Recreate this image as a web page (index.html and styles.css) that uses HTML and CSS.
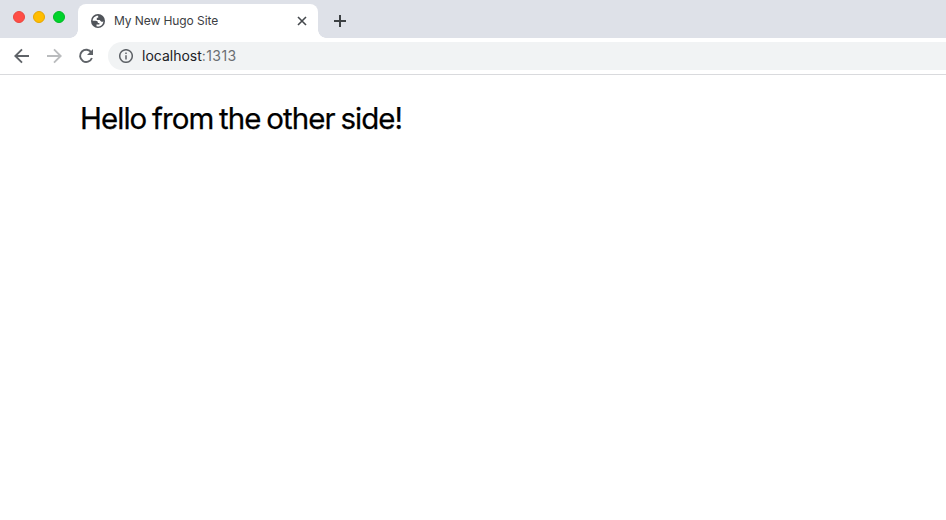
FILE: index.html
```html
<!DOCTYPE html>
<html lang="en">
<head>
<meta charset="utf-8">
<title>My New Hugo Site</title>
<link rel="stylesheet" href="styles.css">
</head>
<body>
<header class="tabs">
  <div class="lights"><i class="light red"></i><i class="light yellow"></i><i class="light green"></i></div>
  <div class="tab">
    <svg class="globe" viewBox="0 0 14 14"><circle cx="7" cy="7" r="7" fill="#50545a"/><path fill="#fff" d="M7.2 1.7C4 1.5 1.7 4 1.6 6.8h3.1c1.5 0 2.2.8 2.2 2.1h1.5v1.5H5.5v1.8c3.6 1 6.7-1.4 6.9-5-.7.7-1.6.7-2.3.3-.8-.4-.9-1.3-1.5-1.5H5.8V3.8h1.4z"/></svg>
    <span class="title">My New Hugo Site</span>
    <svg class="close" viewBox="0 0 10 10"><path d="M1 1l8 8M9 1L1 9"/></svg>
  </div>
  <svg class="plus" viewBox="0 0 12 12"><path d="M6 0v12M0 6h12"/></svg>
</header>
<nav class="toolbar">
  <svg class="nav" viewBox="0 0 16 16"><path d="M15 8H2M8 1.3L1.3 8 8 14.7"/></svg>
  <svg class="nav forward" viewBox="0 0 16 16"><path d="M1 8h13M8 1.3L14.7 8 8 14.7"/></svg>
  <svg class="nav" viewBox="0 0 16 16"><path d="M13.4 4.7A6.1 6.1 0 1 0 13.9 10"/><path class="tip" d="M15 1v6H9z"/></svg>
  <div class="address">
    <svg class="info" viewBox="0 0 14 14"><circle cx="7" cy="7" r="6.3"/><path d="M7 6.2v4.2M7 3.5v1.5"/></svg>
    <span class="url">localhost<span class="port">:1313</span></span>
  </div>
</nav>
<main class="page"><p class="hello">Hello from the other side!</p></main>
</body>
</html>
```

FILE: styles.css
```css
* { box-sizing: border-box; }
body { margin: 0; height: 520px; overflow: hidden; background: #fff; font-family: Inter, "Liberation Sans", sans-serif; }
svg { display: block; flex: none; fill: none; }
.tabs { display: flex; height: 38px; background: #dee1e8; }
.lights { display: flex; gap: 8px; width: 78px; padding: 11px 0 0 13px; }
.light { width: 12px; height: 12px; border-radius: 50%; border: 1px solid; }
.red { background: #ff4d46; border-color: #e94640; }
.yellow { background: #ffbd00; border-color: #e6a600; }
.green { background: #00d32b; border-color: #00b924; }
.tab { position: relative; display: flex; align-items: center; width: 240px; height: 34px; margin-top: 4px; padding: 0 11px 0 13px; background: #fff; border-radius: 8px 8px 0 0; }
.tab::before, .tab::after { content: ""; position: absolute; bottom: 0; width: 8px; height: 8px; }
.tab::before { left: -8px; background: radial-gradient(circle at 0 0, transparent 7.5px, #fff 8px); }
.tab::after { right: -8px; background: radial-gradient(circle at 100% 0, transparent 7.5px, #fff 8px); }
.globe { width: 14px; height: 14px; }
.title { margin-left: 9px; font-size: 12px; line-height: 16px; letter-spacing: -0.08px; color: #3c4043; white-space: nowrap; }
.close { width: 10px; height: 10px; margin-left: auto; stroke: #45494d; stroke-width: 1.6; }
.plus { width: 12px; height: 12px; margin: 15px 0 0 16px; stroke: #3c4043; stroke-width: 2; }
.toolbar { display: flex; align-items: center; gap: 16px; height: 37px; padding-left: 14px; border-bottom: 1px solid #d9dadd; }
.nav { width: 16px; height: 16px; stroke: #5f6368; stroke-width: 1.9; }
.forward { stroke: #babcbe; }
.tip { fill: #5f6368; stroke: none; }
.address { display: flex; align-items: center; flex: 1; height: 28px; margin-left: -2px; padding-left: 11px; border-radius: 14px 0 0 14px; background: #f1f3f4; }
.info { width: 14px; height: 14px; stroke: #5f6368; stroke-width: 1.5; }
.url { margin-left: 9px; font-size: 14px; line-height: 18px; color: #202124; }
.port { letter-spacing: 0.4px; color: #6b6f73; }
.page { padding: 25px 80px; }
.hello { margin: 0; font-size: 29.5px; line-height: 37px; letter-spacing: -0.95px; word-spacing: -1.6px; color: #000; -webkit-text-stroke: 0.25px #000; white-space: nowrap; }
```
